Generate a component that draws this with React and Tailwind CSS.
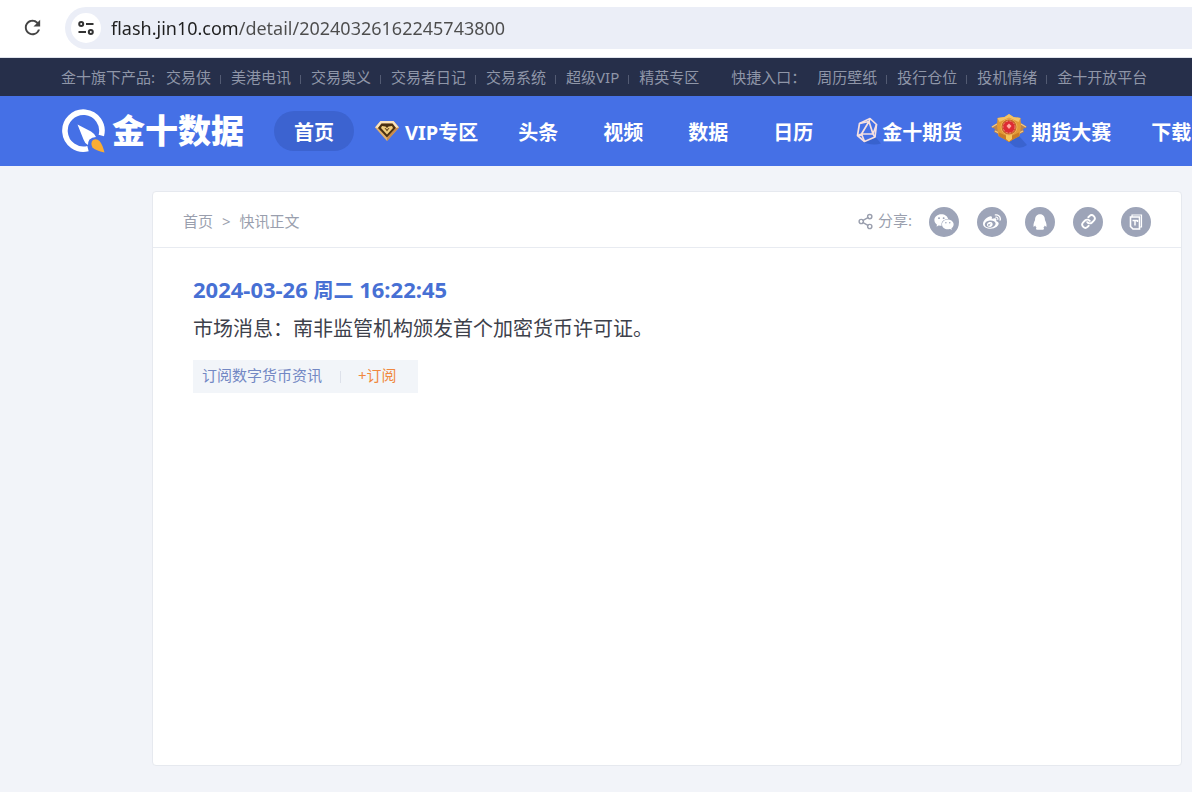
import React from 'react';
import { Share2, Link } from 'lucide-react';
import { AiFillWechat } from 'react-icons/ai';
import { FaWeibo } from 'react-icons/fa';
import { MdRefresh } from 'react-icons/md';

const products = ['交易侠', '美港电讯', '交易奥义', '交易者日记', '交易系统', '超级VIP', '精英专区'];
const shortcuts = ['周历壁纸', '投行仓位', '投机情绪', '金十开放平台'];

const SiteInfoIcon = () => (
    <svg className="w-4 h-4" viewBox="0 0 16 16" fill="none" stroke="#333" strokeWidth="2">
        <circle cx="3.2" cy="4" r="2" />
        <path d="M8 4h7.5M0.5 12H8" />
        <circle cx="12.8" cy="12" r="2" />
    </svg>
);

const LogoMark = () => (
    <svg className="w-[43px] h-[44px] shrink-0" viewBox="0 0 43 44">
        <path d="M26 39.600A18.500 18.500 0 1 1 39.300 26.500" fill="none" stroke="#fff" strokeWidth="5.600" />
        <path d="M15.500 15.500L29 22.500Q33 25 34 28Q30 28 27.500 30.500Q26 32.500 26 36Q22.500 34 21.500 30.500Z" fill="#fff" />
        <path d="M31 31Q34.500 29 37.500 32Q40.500 35.500 42.500 43.500Q33.500 41.500 30.500 38.500Q28 34 31 31Z" fill="#f9ad33" />
    </svg>
);

const GemIcon = () => (
    <svg className="w-6 h-[22px]" viewBox="0 0 24 22">
        <path d="M5.5 1h13L24 7.500 12 21 0 7.500Z" fill="#e3b06c" />
        <path d="M5.500 1h13L24 7.500 21 8 17.500 3.500h-11L3 8 0 7.500Z" fill="#fbe3bc" />
        <path d="M6.500 3.500h11L21 8 12 17.500 3 8Z" fill="#4a3012" />
        <path d="M7 6l3.500.5L12 8l1.500-1.500L17 6l1 2-6 6.500L6 8Z" fill="#f1cd7f" />
        <path d="M9.500 8h1l1.500 1.500L13.500 8h1L12 11.500Z" fill="#6b4a1c" />
        <path d="M12 17.500L21 8l3-.5L12 21Z" fill="#c88a4a" />
    </svg>
);

const FuturesIcon = () => (
    <svg className="w-[26px] h-7" viewBox="0 0 26 28">
        <path d="M6 24.500l5 2q8 2 14 0l-6-7Z" fill="#2c53b5" opacity="0.500" />
        <g fill="none" stroke="#f6e0e0" strokeWidth="1.700" strokeLinejoin="round">
            <path d="M14 1.500l6.500 6L19 20 8.500 24.500 1.500 18.500 3.500 6.500Z" />
            <path d="M13 4.500l-7.500 12.500h11.500ZM13 4.500l1-3M13 4.500l-9.500 2M17 17l2 3M5.500 17l-4 1.500M5.500 17l3 7.500M17 17l3.500-9.500" />
        </g>
    </svg>
);

const MedalIcon = () => (
    <svg className="w-[38px] h-9" viewBox="0 0 38 36">
        <path d="M18 29l6 5q7 2 12-2l-8-9Z" fill="#2b50ad" opacity="0.400" />
        <path d="M7 9.500L0 14l4 2-1 3 6 3ZM29 9.500l7 4.500-4 2 1 3-6 3Z" fill="#b98350" />
        <path d="M1 14l5-3M35 14l-5-3M4 18l4 2M32 18l-4 2" stroke="#f2c884" strokeWidth="1.300" />
        <path d="M18 1l4.500 3 7 1 .5 8-1.500 10-6.500 3.500-4 2.500-4-2.500-6.500-3.500L6 13l.5-8 7-1Z" fill="#e29a35" />
        <path d="M18 1l4.500 3 7 1-2 4L18 4.500 8.500 9l-2-4 7-1Z" fill="#f3c368" />
        <path d="M7.500 23L8 19.500l10 4.500 10-4.500.5 3.500-6.500 3.500-4 2.500-4-2.500Z" fill="#c87a25" />
        <path d="M15 22h6v4l-3 2.500-3-2.500Z" fill="#f9c65a" />
        <circle cx="18" cy="14" r="8" fill="#c9662a" stroke="#edb256" strokeWidth="1" />
        <circle cx="18" cy="14" r="6" fill="#dd2b34" stroke="#f08070" strokeWidth="1" strokeDasharray="2 1.500" />
        <path d="M18 10.500l2.500 2.500-2.500 3-2.500-3Z" fill="#ffaaa2" />
    </svg>
);

const QqIcon = () => (
    <svg className="w-[18px] h-[18px]" viewBox="0 0 16 16" fill="#fff">
        <path d="M8 1C5 1 3.600 3.200 3.600 6.300 3 7.500 2 9.500 2.200 12c.3.500 1-.2 1.600-.8.3 1 .6 1.500 1.200 2-.8.4-.8 1.300.2 1.600H8h2.800c1-.3 1-1.200.2-1.600.6-.5.900-1 1.200-2 .6.600 1.300 1.300 1.600.8.2-2.500-.8-4.500-1.400-5.700C12.400 3.200 11 1 8 1Z" />
    </svg>
);

const PostIcon = () => (
    <svg className="w-4 h-4" viewBox="0 0 16 16" fill="none" stroke="#fff">
        <path d="M4 3V1h9.500v12H12" strokeWidth="1.200" />
        <path d="M2.500 3h9v12H5l-2.500-2.500Z" strokeWidth="1.600" />
        <path d="M4.500 6.500h5M7 6.500v5M9.500 6v2" strokeWidth="1.500" />
    </svg>
);

const shareLinks = [
    { title: '微信', icon: <AiFillWechat className="w-[22px] h-[22px]" /> },
    { title: '微博', icon: <FaWeibo className="w-[18px] h-[18px]" /> },
    { title: 'QQ', icon: <QqIcon /> },
    { title: '复制链接', icon: <Link className="w-[15px] h-[15px]" strokeWidth={3} /> },
    { title: '长图', icon: <PostIcon /> }
];

const navItems = [
    { title: 'VIP专区', icon: <GemIcon />, style: 'gap-[6px] pl-[21px] pr-[18px]' },
    { title: '头条', style: 'pl-[22px] pr-[23px]' },
    { title: '视频', style: 'pl-[22px] pr-[23px]' },
    { title: '数据', style: 'pl-[22px] pr-[23px]' },
    { title: '日历', style: 'pl-[22px] pr-[23px]' },
    { title: '金十期货', icon: <FuturesIcon />, style: 'pl-5 pr-[14px]' },
    { title: '期货大赛', icon: <MedalIcon />, style: 'pl-[15px] pr-5 gap-[2px]' },
    { title: '下载', style: 'px-5' }
];

const LinkList = ({ items }) => (
    <ul className="flex items-center">
        {items.map((item, idx) => (
            <li key={item} className="flex items-center">
                {idx > 0 && <span className="w-px h-[9px] ml-[9px] mr-[10px] mt-1 bg-[#535b73]"></span>}
                <a href="#" className="hover:text-white">{item}</a>
            </li>
        ))}
    </ul>
);

const BrowserBar = () => (
    <div className="h-[58px] flex items-center bg-white border-b border-[#dfe3ec] pl-[21px] pb-[2px]">
        <button aria-label="重新加载" className="text-[#444]">
            <MdRefresh className="w-[23px] h-[23px]" />
        </button>
        <div className="flex-1 h-[42px] ml-[21px] pl-[6px] flex items-center rounded-l-full bg-[#ebeef7]">
            <button aria-label="网站信息" className="w-[30px] h-[30px] shrink-0 rounded-full bg-white flex items-center justify-center">
                <SiteInfoIcon />
            </button>
            <input
                aria-label="地址"
                defaultValue="flash.jin10.com/detail/20240326162245743800"
                className="flex-1 min-w-0 ml-[10px] text-lg outline-none text-transparent bg-clip-text bg-[linear-gradient(90deg,#1f1f1f_127px,#4c4c4c_127px)]"
            />
        </div>
    </div>
);

const App = () => {
    return (
        <div className="min-h-screen flex flex-col overflow-hidden whitespace-nowrap bg-[#f2f4f9] font-['Noto_Sans','Noto_Sans_CJK_SC',sans-serif]">
            <BrowserBar />

            <div className="h-[38px] flex items-center pl-[61px] bg-[#262f4a] text-[#8f96a8] text-[15px]">
                <span className="mr-[11px]">金十旗下产品:</span>
                <LinkList items={products} />
                <span className="ml-8 mr-[11px]">快捷入口：</span>
                <LinkList items={shortcuts} />
            </div>

            <header className="h-[70px] flex items-center pl-[62px] bg-[#4570e6] text-white">
                <a href="#" className="flex items-center gap-[7px] shrink-0">
                    <LogoMark />
                    <span className="text-[33px] leading-10 font-black">金十数据</span>
                </a>
                <nav className="flex items-center ml-[30px] text-xl font-bold">
                    <a href="#" className="h-10 px-5 pt-[3px] flex items-center rounded-full bg-[#3c63d0]">首页</a>
                    {navItems.map((item) => (
                        <a key={item.title} href="#" className={`h-10 shrink-0 flex items-center ${item.style}`}>
                            {item.icon}
                            <span className="pt-[3px]">{item.title}</span>
                        </a>
                    ))}
                </nav>
            </header>

            <main className="flex-1 flex flex-col ml-[152px] mr-[10px] mt-[25px] mb-[26px] bg-white rounded border border-[#e6e9ef]">
                <div className="h-14 px-[30px] flex items-center justify-between border-b border-[#e8ebf1] text-[15px] text-[#9a9fae]">
                    <div className="flex items-center gap-[9px] pt-[3px]">
                        <a href="#">首页</a>
                        <span>&gt;</span>
                        <span>快讯正文</span>
                    </div>
                    <div className="flex items-center pt-1">
                        <Share2 className="w-[17px] h-[17px]" />
                        <span className="ml-1 mr-[17px] pb-[2px]">分享:</span>
                        <div className="flex gap-[18px]">
                            {shareLinks.map((link) => (
                                <button
                                    key={link.title}
                                    aria-label={link.title}
                                    className="w-[30px] h-[30px] rounded-full bg-[#9da4b8] text-white flex items-center justify-center"
                                >
                                    {link.icon}
                                </button>
                            ))}
                        </div>
                    </div>
                </div>

                <article className="px-10 pt-[26px] whitespace-normal">
                    <time className="block text-[22px] leading-[30px] font-bold text-[#4770d4]">
                        2024-03-26 <span className="text-xl leading-[30px]">周二</span> 16:22:45
                    </time>
                    <p className="mt-[3px] text-xl leading-10 text-[#3d414b]">市场消息：南非监管机构颁发首个加密货币许可证。</p>
                    <div className="w-[225px] h-[33px] mt-[11px] pl-[9px] pb-[2px] flex items-center bg-[#f2f5f9] text-[15px]">
                        <span className="text-[#7388c4]">订阅数字货币资讯</span>
                        <span className="w-px h-3 mt-[2px] ml-[18px] mr-[17px] bg-[#dde1ea]"></span>
                        <button className="text-[#f0883f]">+订阅</button>
                    </div>
                </article>
            </main>
        </div>
    );
};

export default App;
